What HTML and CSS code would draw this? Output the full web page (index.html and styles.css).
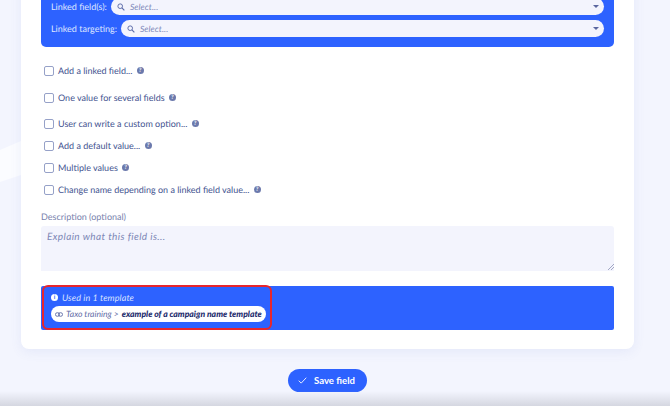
FILE: index.html
```html
<!DOCTYPE html>
<html lang="en">
<head>
<meta charset="utf-8">
<title>Field settings</title>
<link rel="stylesheet" href="styles.css">
</head>
<body>
<svg class="bg-shape" width="21" height="80" viewBox="0 0 21 80"><path d="M0 10 L21 1 V35 L0 42 Z" fill="#fbfcff"/></svg>
<main class="page">
  <section class="card">
    <div class="linked-box">
      <div class="link-row">
        <span class="link-label">Linked field(s):</span>
        <div class="select">
          <svg class="search" width="8" height="8" viewBox="0 0 10 10"><circle cx="4" cy="4" r="2.9" fill="none" stroke="#5a6aa8" stroke-width="1.2"/><path d="M6.2 6.2 9.2 9.2" stroke="#5a6aa8" stroke-width="1.4"/></svg>
          <span class="placeholder">Select...</span>
          <span class="caret"></span>
        </div>
      </div>
      <div class="link-row">
        <span class="link-label">Linked targeting:</span>
        <div class="select">
          <svg class="search" width="8" height="8" viewBox="0 0 10 10"><circle cx="4" cy="4" r="2.9" fill="none" stroke="#5a6aa8" stroke-width="1.2"/><path d="M6.2 6.2 9.2 9.2" stroke="#5a6aa8" stroke-width="1.4"/></svg>
          <span class="placeholder">Select...</span>
          <span class="caret"></span>
        </div>
      </div>
    </div>

    <div class="options">
      <label class="option gap-27"><span class="box"></span>Add a linked field... <span class="help">?</span></label>
      <label class="option gap-26"><span class="box"></span>One value for several fields <span class="help">?</span></label>
      <label class="option gap-22"><span class="box"></span>User can write a custom option... <span class="help">?</span></label>
      <label class="option gap-22"><span class="box"></span>Add a default value... <span class="help">?</span></label>
      <label class="option gap-22"><span class="box"></span>Multiple values <span class="help">?</span></label>
      <label class="option"><span class="box"></span>Change name depending on a linked field value... <span class="help">?</span></label>
    </div>

    <div class="desc-label">Description (optional)</div>
    <div class="textarea">
      <span class="desc-ph">Explain what this field is...</span>
      <svg class="grip" width="6" height="6" viewBox="0 0 6 6"><path d="M0 6 6 0M3 6 6 3" stroke="#8d93b5" stroke-width=".8"/></svg>
    </div>

    <div class="used">
      <div class="used-title">
        <span class="info">i</span>
        <em>Used in 1 template</em>
      </div>
      <div class="pill">
        <svg class="chain" width="8" height="5" viewBox="0 0 9 5"><rect x=".5" y=".5" width="4.6" height="4" rx="2" fill="none" stroke="#4a5a9c" stroke-width=".9"/><rect x="3.9" y=".5" width="4.6" height="4" rx="2" fill="none" stroke="#4a5a9c" stroke-width=".9"/></svg>
        <span class="crumb">Taxo training &gt;</span>
        <strong class="tpl">example of a campaign name template</strong>
      </div>
      <div class="highlight"></div>
    </div>
  </section>

  <div class="actions">
    <button class="save" type="button">
      <svg width="9" height="7" viewBox="0 0 10 8"><path d="M.7 4.2 3.5 7 9.3 .8" fill="none" stroke="#fff" stroke-width="1"/></svg>
      <span>Save field</span>
    </button>
  </div>
</main>
<div class="fade"></div>
</body>
</html>
```
FILE: styles.css
```css
* { box-sizing: border-box; }
html, body { margin: 0; height: 406px; overflow: hidden; }
body {
  position: relative;
  background: #f3f5fe;
  font-family: "Lato", "Noto Sans", sans-serif;
  text-rendering: geometricPrecision;
  color: #3f4f96;
}
.bg-shape { position: absolute; left: 0; top: 140px; }
.page { position: relative; padding: 0 36px 0 21px; }
.card {
  margin-top: -20px;
  height: 369px;
  padding: 0 20px;
  background: #fff;
  border-radius: 0 0 8px 8px;
  box-shadow: 0 3px 12px rgba(90, 110, 200, .09);
}
.linked-box {
  height: 67px;
  padding: 13px 10px 0 10px;
  background: #2d62ff;
  border-radius: 0 0 5px 5px;
  display: flex;
  flex-direction: column;
  gap: 5px;
}
.link-row { display: flex; align-items: center; gap: 4px; height: 17px; }
.link-row:first-child { height: 22px; align-items: flex-end; }
.link-label {
  color: #dfe6ff;
  font-size: 9px;
  line-height: 17px;
  white-space: nowrap;
}
.select {
  flex: 1;
  height: 17px;
  background: #f3f4fd;
  border-radius: 9px;
  display: flex;
  align-items: center;
  padding: 0 5px 0 6px;
}
.search { flex: none; margin-right: 5px; }
.placeholder { font-style: italic; font-size: 8.6px; color: #7b86b8; flex: 1; letter-spacing: .1px; }
.caret {
  width: 0; height: 0;
  border-left: 3px solid transparent;
  border-right: 3px solid transparent;
  border-top: 3px solid #5a669f;
}
.options { display: flex; flex-direction: column; padding: 19px 0 0 3px; }
.option {
  display: flex;
  align-items: center;
  height: 9px;
  font-size: 9px;
  white-space: pre;
  color: #43538f;
}
.gap-27 { margin-bottom: 18px; }
.gap-26 { margin-bottom: 17px; }
.gap-22 { margin-bottom: 13px; }
.box {
  width: 10px; height: 10px;
  margin-right: 4px;
  border: 1px solid #96a1c8;
  border-radius: 2px;
  background: #fff;
  flex: none;
}
.help {
  width: 7px; height: 7px;
  margin-left: 2px;
  border-radius: 50%;
  background: #6b79ac;
  color: #fff;
  font-size: 6px;
  font-weight: 700;
  line-height: 7px;
  text-align: center;
  flex: none;
}
.desc-label { margin-top: 17px; font-size: 9px; line-height: 12px; color: #7882ad; }
.textarea {
  position: relative;
  margin-top: 3px;
  height: 45px;
  background: #f3f4fd;
  padding: 5px 6px;
  border-radius: 3px 3px 0 0;
}
.desc-ph { display: block; font-style: italic; font-size: 10px; line-height: 12px; color: #7d87b6; letter-spacing: .4px; }
.grip { position: absolute; right: 0; bottom: 1px; }
.used {
  position: relative;
  margin-top: 15px;
  height: 44px;
  background: #2d62ff;
  border-radius: 2px;
  padding: 6px 10px 0;
}
.used-title { display: flex; align-items: center; gap: 4px; height: 10px; color: #dbe3ff; font-size: 9px; letter-spacing: .1px; }
.info {
  width: 7px; height: 7px;
  border-radius: 50%;
  background: #fff;
  color: #2d62ff;
  font-size: 6px;
  font-weight: 700;
  line-height: 7px;
  text-align: center;
  flex: none;
  font-style: normal;
}
.pill {
  margin-top: 4px;
  width: 215px;
  height: 16px;
  background: #fff;
  border-radius: 8px;
  display: flex;
  align-items: center;
  padding: 0 5px 0 4px;
  white-space: nowrap;
  font-size: 8.6px;
  font-style: italic;
}
.chain { flex: none; margin-right: 3px; }
.crumb { color: #5e6ba6; margin-right: 3px; }
.tpl { color: #1c2a6b; font-weight: 900; font-size: 8.6px; }
.highlight {
  position: absolute;
  left: 1px; top: -1px;
  width: 230px; height: 45px;
  border: 2px solid #e8262c;
  border-radius: 6px;
}
.actions { display: flex; justify-content: center; padding-top: 20px; }
.save {
  width: 79px;
  height: 23px;
  padding: 0 0 0 10px;
  border: 0;
  border-radius: 12px;
  background: #2d62ff;
  color: #fff;
  font-family: inherit;
  font-size: 9.6px;
  font-weight: 700;
  display: flex;
  align-items: center;
  gap: 7px;
}
.fade {
  position: absolute;
  left: 0; right: 0; bottom: 0;
  height: 15px;
  background: linear-gradient(rgba(200, 202, 212, 0), rgba(200, 202, 212, .7));
}
```
